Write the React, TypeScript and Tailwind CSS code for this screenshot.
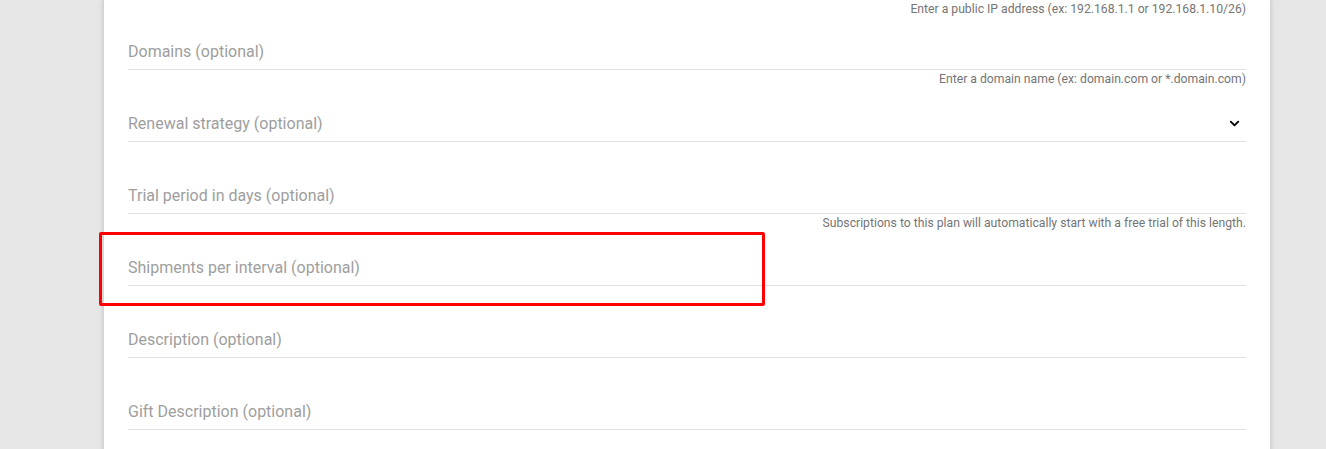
import { ChevronDown } from "lucide-react";

type Field = {
  label: string;
  helper?: string;
  select?: boolean;
  highlight?: boolean;
};

const fields: Field[] = [
  { label: "Domains (optional)", helper: "Enter a domain name (ex: domain.com or *.domain.com)" },
  { label: "Renewal strategy (optional)", select: true },
  {
    label: "Trial period in days (optional)",
    helper: "Subscriptions to this plan will automatically start with a free trial of this length.",
  },
  { label: "Shipments per interval (optional)", highlight: true },
  { label: "Description (optional)" },
  { label: "Gift Description (optional)" },
];

function FormField({ field }: { field: Field }) {
  return (
    <div className="relative">
      <div className="flex h-[48px] items-end justify-between border-b border-[#e0e0e0] pb-[7px]">
        <span className="text-[16px] leading-[20px] text-[#9e9e9e]">{field.label}</span>
        {field.select && (
          <ChevronDown size={15} strokeWidth={3} className="mb-[3px] mr-[4px] text-black" />
        )}
      </div>
      <div className="h-[24px] pt-[2px] text-right text-[12.2px] leading-[14px] text-[#757575]">
        {field.helper}
      </div>
      {field.highlight && (
        <div className="pointer-events-none absolute left-[-29px] top-[-6px] h-[74px] w-[666px] rounded-[2px] border-[3px] border-[#ff0000]" />
      )}
    </div>
  );
}

export default function App() {
  return (
    <div
      className="h-[449px] w-full overflow-hidden bg-[#e5e6e5]"
      style={{ fontFamily: "Roboto, 'Liberation Sans', sans-serif" }}
    >
      <div className="ml-[103px] h-[470px] w-[1168px] border-x border-[#d4d4d4] bg-white px-[24px] shadow-[0_0_4px_rgba(0,0,0,0.15)]">
        <div className="h-[22px] pt-[2px] text-right text-[12.2px] leading-[14px] text-[#757575]">
          Enter a public IP address (ex: 192.168.1.1 or 192.168.1.10/26)
        </div>
        {fields.map((f) => (
          <FormField key={f.label} field={f} />
        ))}
      </div>
    </div>
  );
}
